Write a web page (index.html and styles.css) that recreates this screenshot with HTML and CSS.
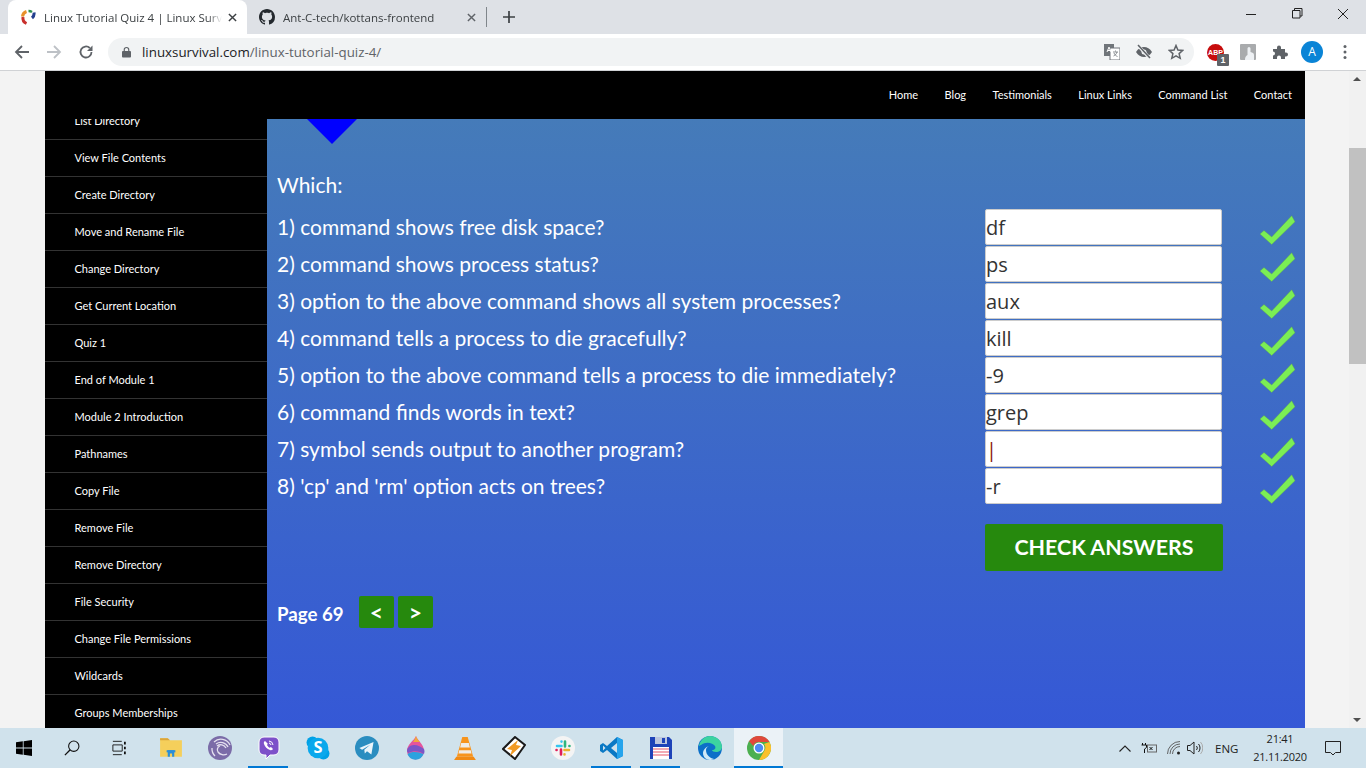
FILE: index.html
```html
<!DOCTYPE html>
<html lang="en">
<head>
  <meta charset="UTF-8">
  <title>Linux Tutorial Quiz 4 | Linux Survival</title>
  <link rel="stylesheet" href="styles.css">
</head>
<body>
  <div class="tabstrip">
    <div class="tab tab-active">
      <svg class="favicon" viewBox="0 0 16 16" fill="none" stroke-width="3">
        <path d="M2.500 7.500 A6 6 0 0 1 6.500 2.500" stroke="#e8912c"/>
        <path d="M8.500 2 A6 6 0 0 1 12 3" stroke="#2f8f4e" stroke-width="2.400"/>
        <path d="M14 3.500 A6 6 0 0 1 12 9" stroke="#24408f"/>
        <path d="M3 8 A6 6 0 0 0 6.500 14.500" stroke="#c9302c"/>
      </svg>
      <span class="tab-title">Linux Tutorial Quiz 4 | Linux Survival</span>
      <svg class="tab-close" viewBox="0 0 10 10"><path d="M1 1 9 9M9 1 1 9" stroke="#3c4043" stroke-width="1.6"/></svg>
    </div>
    <div class="tab">
      <svg class="favicon" viewBox="0 0 16 16"><path fill="#24292e" d="M8 0C3.58 0 0 3.58 0 8c0 3.54 2.29 6.53 5.47 7.59.4.07.55-.17.55-.38 0-.19-.01-.82-.01-1.49-2.01.37-2.53-.49-2.69-.94-.09-.23-.48-.94-.82-1.13-.28-.15-.68-.52-.01-.53.63-.01 1.08.58 1.23.82.72 1.21 1.87.87 2.33.66.07-.52.28-.87.51-1.07-1.78-.2-3.64-.89-3.64-3.95 0-.87.31-1.59.82-2.15-.08-.2-.36-1.02.08-2.12 0 0 .67-.21 2.2.82.64-.18 1.32-.27 2-.27.68 0 1.36.09 2 .27 1.53-1.04 2.2-.82 2.2-.82.44 1.1.16 1.92.08 2.12.51.56.82 1.27.82 2.15 0 3.07-1.87 3.75-3.65 3.95.29.25.54.73.54 1.48 0 1.07-.01 1.93-.01 2.2 0 .21.15.46.55.38A8.013 8.013 0 0016 8c0-4.42-3.58-8-8-8z"/></svg>
      <span class="tab-title">Ant-C-tech/kottans-frontend</span>
      <svg class="tab-close" viewBox="0 0 10 10"><path d="M1 1 9 9M9 1 1 9" stroke="#5f6368" stroke-width="1.6"/></svg>
    </div>
    <div class="tab-sep"></div>
    <svg class="new-tab" viewBox="0 0 12 12"><path d="M6 0V12M0 6H12" stroke="#3c4043" stroke-width="1.7"/></svg>
    <div class="win-controls">
      <svg viewBox="0 0 46 14"><path d="M18 7.500H28" stroke="#222" stroke-width="1"/></svg>
      <svg viewBox="0 0 46 14"><path d="M18.500 3.500h7.500v7.500h-7.500zM20.500 3.500v-2h7.500v7.500h-2" fill="none" stroke="#222"/></svg>
      <svg viewBox="0 0 46 14"><path d="M18 2 28 12M28 2 18 12" stroke="#222"/></svg>
    </div>
  </div>

  <div class="toolbar">
    <svg class="nav-icon" viewBox="0 0 16 16"><path d="M15 8H2M8 2 2 8l6 6" fill="none" stroke="#5f6368" stroke-width="1.8"/></svg>
    <svg class="nav-icon" viewBox="0 0 16 16"><path d="M1 8H14M8 2l6 6-6 6" fill="none" stroke="#bdc1c6" stroke-width="1.8"/></svg>
    <svg class="nav-icon" viewBox="0 0 16 16"><path d="M13.500 8A5.500 5.500 0 1 1 11.800 4" fill="none" stroke="#5f6368" stroke-width="1.8"/><path d="M14.500 1.500V7H9z" fill="#5f6368"/></svg>
    <div class="omnibox">
      <svg class="lock" viewBox="0 0 10 12"><path d="M2.500 5V3.500a2.500 2.500 0 0 1 5 0V5" fill="none" stroke="#5f6368" stroke-width="1.300"/><rect y="5" width="10" height="7" rx="1" fill="#5f6368"/></svg>
      <span class="url"><b>linuxsurvival.com</b>/linux-tutorial-quiz-4/</span>
      <svg class="omni-icon" viewBox="0 0 16 16"><rect x="0" y="0" width="10" height="12" fill="#70757a"/><rect x="6" y="4" width="10" height="12" fill="#fff" stroke="#70757a"/><path d="M9 8h5M11.500 6.500v1M13 8c-.500 2-2 3.500-3.500 4M10 9c.5 1.500 2 3 3.500 3.500" stroke="#70757a" fill="none" stroke-width=".8"/><path d="M3 8l2-5 2 5M3.800 6.500h2.400" stroke="#fff" fill="none" stroke-width="1"/></svg>
      <svg class="omni-icon" viewBox="0 0 16 16"><path d="M0 8c2-3.500 5-5 8-5s6 1.500 8 5c-2 3.500-5 5-8 5s-6-1.500-8-5z" fill="#5f6368"/><circle cx="8" cy="8" r="2.500" fill="#f1f3f4"/><path d="M2 1.500 14 14.500" stroke="#f1f3f4" stroke-width="3.200"/><path d="M2 1 14 14" stroke="#5f6368" stroke-width="1.500"/></svg>
      <svg class="omni-icon" viewBox="0 0 16 16"><path d="M8 1.500 9.900 6l4.800.4-3.600 3.200 1.100 4.700L8 11.800l-4.200 2.500 1.100-4.700L1.300 6.400 6.100 6z" fill="none" stroke="#5f6368" stroke-width="1.500"/></svg>
    </div>
    <div class="ext ext-abp"><span class="abp">ABP</span><span class="abp-count">1</span></div>
    <div class="ext">
      <svg class="ext-icon" viewBox="0 0 16 16"><rect width="16" height="16" rx="1" fill="#a9abad"/><path d="M5 16c0-3 1-4 2.500-5V4.500a1.500 1.500 0 0 1 3 0V8c2 .5 3.500 1 3.500 3v5z" fill="#eef1f4"/></svg>
    </div>
    <div class="ext">
      <svg class="ext-icon" viewBox="0 0 16 16"><path d="M1 5h4V3.500a2 2 0 0 1 4 0V5h4v3.500h1a2 2 0 0 1 0 4h-1V15H9v-1.500a2 2 0 0 0-4 0V15H1v-3.500a2 2 0 0 0 0-4z" fill="#5f6368"/></svg>
    </div>
    <div class="avatar">A</div>
    <svg class="menu-dots" viewBox="0 0 4 16"><circle cx="2" cy="2.500" r="1.500"/><circle cx="2" cy="8" r="1.500"/><circle cx="2" cy="13.500" r="1.500"/></svg>
  </div>

  <div class="viewport">
    <div class="site">
      <div class="site-header">
        <a>Home</a>
        <a>Blog</a>
        <a>Testimonials</a>
        <a>Linux Links</a>
        <a>Command List</a>
        <a>Contact</a>
      </div>
      <div class="site-body">
        <div class="sidebar">
          <ul class="lessons">
            <li>List Directory</li>
            <li>View File Contents</li>
            <li>Create Directory</li>
            <li>Move and Rename File</li>
            <li>Change Directory</li>
            <li>Get Current Location</li>
            <li>Quiz 1</li>
            <li>End of Module 1</li>
            <li>Module 2 Introduction</li>
            <li>Pathnames</li>
            <li>Copy File</li>
            <li>Remove File</li>
            <li>Remove Directory</li>
            <li>File Security</li>
            <li>Change File Permissions</li>
            <li>Wildcards</li>
            <li>Groups Memberships</li>
          </ul>
        </div>
        <div class="main">
          <div class="marker"></div>
          <p class="which">Which:</p>
          <div class="quiz" id="quiz"></div>
          <button class="check-btn">CHECK ANSWERS</button>
          <div class="pager">
            <span class="page-label">Page 69</span>
            <button class="page-btn">&lt;</button>
            <button class="page-btn">&gt;</button>
          </div>
        </div>
      </div>
    </div>
    <div class="scrollbar">
      <div class="arrow-up"></div>
      <div class="thumb"></div>
      <div class="arrow-down"></div>
    </div>
  </div>

  <div class="taskbar">
    <div class="task-start">
      <svg class="task-icon-sm" viewBox="0 0 16 16"><path fill="#000" d="M0 2.300 6.800 1.300V7.600H0zM7.600 1.200 16 0V7.600H7.600zM0 8.400H6.800V14.700L0 13.700zM7.600 8.400H16V16L7.600 14.800z"/></svg>
    </div>
    <div class="task-start">
      <svg class="task-icon-sm" viewBox="0 0 18 18"><circle cx="11" cy="7" r="5.800" fill="none" stroke="#111" stroke-width="1.200"/><path d="M7 11 1 17" stroke="#111" stroke-width="1.500"/></svg>
    </div>
    <div class="task-start">
      <svg class="task-icon-sm" viewBox="0 0 18 16"><path d="M1 .5h10M1 15.500h10M1 4.500h10.500v7H1z" fill="none" stroke="#111"/><path d="M14.500 1v3M14.500 6.500v3M14.500 12v3" stroke="#111" stroke-width="2"/></svg>
    </div>
    <div class="task-apps">
      <div class="task-app">
        <svg viewBox="0 0 22 20"><path d="M1 1h7l2 2h11v15H1z" fill="#f5cf5b"/><path d="M1 1h7l2 2H1z" fill="#dba53a"/><path d="M8 18v-6h6v6h-2v-3h-2v3z" fill="#2a8fd8"/><path d="M7 12h8v2H7z" fill="#2a8fd8"/></svg>
      </div>
      <div class="task-app">
        <svg viewBox="0 0 24 24"><circle cx="12" cy="12" r="12" fill="#7b6ca8"/><path d="M22 9A10 10 0 0 0 6 6M20 11A8 8 0 0 0 8 8M18 12A6 6 0 0 0 9 10M7 20A10 10 0 0 1 4 12" fill="none" stroke="#e4e0ef" stroke-width="1.300"/><path d="M19 18a7 7 0 0 1-9-2 4 4 0 0 1 2-6" fill="none" stroke="#e4e0ef" stroke-width="1.300"/></svg>
      </div>
      <div class="task-app task-running">
        <svg viewBox="0 0 22 24"><path d="M6 1h10a5 5 0 0 1 5 5v8a5 5 0 0 1-5 5h-4l-4 4v-4H6a5 5 0 0 1-5-5V6a5 5 0 0 1 5-5z" fill="#7d51c9" stroke="#fff" stroke-width="1"/><path d="M7 5c-1 .5-1.500 1.500-1 3 1 3 3 5 6 6 1.500.5 2.500 0 3-1l-2-2-1.500.7c-1-.5-2-1.500-2.500-2.700l.8-1.300z" fill="#fff"/><path d="M11 5a4.500 4.500 0 0 1 4 4M11 7a2.500 2.500 0 0 1 2 2" fill="none" stroke="#fff"/></svg>
      </div>
      <div class="task-app">
        <svg viewBox="0 0 22 22"><circle cx="6" cy="6" r="5.500" fill="#00a1e6"/><circle cx="16" cy="16" r="5.500" fill="#00a1e6"/><circle cx="11" cy="11" r="9.500" fill="#0aa8ec"/><text x="11" y="16" class="skype-s">S</text></svg>
      </div>
      <div class="task-app">
        <svg viewBox="0 0 22 22"><circle cx="11" cy="11" r="11" fill="#2a8dc0"/><path d="M4 11 17 5.500 15 17l-4-3-2 2-.5-3.500L14 8l-7.500 4.500z" fill="#e9f4fa"/></svg>
      </div>
      <div class="task-app">
        <svg viewBox="0 0 20 24"><path d="M10 0c1 4 8 8 8 15a8.500 8.500 0 0 1-17 0C1 8 8 5 10 0z" fill="#e6559c"/><path d="M1 15c0-3 3-6 7-6s7 2 10 4l.5 2c0 1-.2 2-.5 3-4-3-10-4-16-1-.5-1-1-1.500-1-2z" fill="#7b56c7"/><path d="M1.500 18c5-3 11-2 16 0a8.500 8.500 0 0 1-16 0z" fill="#2ca2df"/><path d="M10 0c.5 2 2 4 4 6H7c1.500-2 2.500-4 3-6z" fill="#f2a93b"/></svg>
      </div>
      <div class="task-app">
        <svg viewBox="0 0 20 22"><path d="M0 22 2 19h16l2 3z" fill="#f18a14"/><path d="M7.500 1h5l5 18h-15z" fill="#f7941d"/><path d="M6.500 6.500h7l1 4h-9zM4.700 13h10.600l.7 3H4z" fill="#f0ece6"/></svg>
      </div>
      <div class="task-app">
        <svg viewBox="0 0 24 24"><path d="M13 1 23 9l-10 14L1 13z" fill="#fff" stroke="#1a1a1a" stroke-width="2"/><path d="M16 4 5 13l5 1-2 6 11-10-5-1z" fill="#f19a24"/></svg>
      </div>
      <div class="task-app">
        <svg viewBox="0 0 24 24" fill="none" stroke-width="2.600" stroke-linecap="round"><circle cx="12" cy="12" r="12" fill="#f4f4f4"/><path d="M6 10h4.500M10.500 5.500v.1" stroke="#36c5f0"/><path d="M14 5.500v5M18.500 10h-.1" stroke="#2eb67d"/><path d="M13.500 14H18M13.500 18.500v-.1" stroke="#ecb22e"/><path d="M10 13.500v5M5.500 14h.1" stroke="#e01e5a"/></svg>
      </div>
      <div class="task-app task-running">
        <svg viewBox="0 0 24 24"><path d="M17 1 23 4v16l-6 3L7 14l-4 3-3-2v-6l3-2 4 3z" fill="#0a78c4"/><path d="M17 1 23 4v16l-6 3z" fill="#26a4ec"/><path d="M17 7v10l-6-5z" fill="#d0e2ec"/><path d="M3 9.500v5l2.500-2.500z" fill="#d0e2ec"/></svg>
      </div>
      <div class="task-app task-running">
        <svg viewBox="0 0 24 24"><path d="M1 1h19l3 3v19H1z" fill="#1e43b8"/><rect x="6" y="1" width="12" height="7" fill="#bcc6de"/><rect x="13" y="2" width="3" height="5" fill="#1e43b8"/><rect x="4" y="11" width="16" height="12" fill="#fff"/><path d="M4 13h16M4 16h16M4 19h16" stroke="#ee8e9c" stroke-width="1.500"/></svg>
      </div>
      <div class="task-app">
        <svg viewBox="0 0 24 24"><circle cx="12" cy="12" r="12" fill="#0c70c8"/><path d="M1 10C2 4 7 0 12 0c7 0 12 5 12 11 0 3-3 5-6 5-2 0-4-1-4-2 3 0 4-2 3-4-2-3-9-5-14-1-1 .5-2 1-2 1z" fill="#3cd3a0"/><path d="M8 14c0 5 4 8 8 9-1.500.7-3 1-4 1C8 24 5 21 5 17c0-3 3-6 6-7-2 1-3 2-3 4z" fill="#cfe9f7"/></svg>
      </div>
      <div class="task-app task-chrome">
        <svg viewBox="0 0 24 24"><circle cx="12" cy="12" r="12" fill="#4caf50"/><path d="M12 0a12 12 0 0 1 10.400 6H12a6 6 0 0 0-5.700 4L2.100 5.200A12 12 0 0 1 12 0z" fill="#e0483c"/><path d="M22.400 6A12 12 0 0 1 12 24l5.200-9A6 6 0 0 0 17 8z" fill="#fbc02d"/><circle cx="12" cy="12" r="5.500" fill="#fff"/><circle cx="12" cy="12" r="4.200" fill="#4c8bf5"/></svg>
      </div>
    </div>
    <div class="tray">
      <svg class="tray-chev" viewBox="0 0 12 7"><path d="M.5 6.500 6 1l5.500 5.500" fill="none" stroke="#222" stroke-width="1.100"/></svg>
      <svg class="tray-power" viewBox="0 0 17 12"><path d="M1.500 1v2M4.500 1v2M.5 3h5v2.500l-2 1.500v4" fill="none" stroke="#111"/><rect x="6.500" y="3" width="9" height="7" fill="none" stroke="#666"/><path d="M8.500 5l3 3M11.500 5l-3 3" stroke="#111"/></svg>
      <svg class="tray-wifi" viewBox="0 0 14 14"><path d="M.5 13A12.500 12.500 0 0 1 13 .5M3 13A10 10 0 0 1 13 3M5.500 13A7.500 7.500 0 0 1 13 5.500" fill="none" stroke="#555" stroke-width=".9"/><circle cx="11.500" cy="12" r="1.500" fill="#222"/></svg>
      <svg class="tray-sound" viewBox="0 0 16 14"><path d="M.5 4.500H3L7 1v12L3 9.500H.5z" fill="none" stroke="#222"/><path d="M9.500 5a3 3 0 0 1 0 4M11.500 3a6 6 0 0 1 0 8" fill="none" stroke="#222"/><path d="M13.500 1a9 9 0 0 1 0 12" fill="none" stroke="#aaa"/></svg>
      <span class="tray-lang">ENG</span>
      <div class="clock"><span>21:41</span><span>21.11.2020</span></div>
      <svg class="tray-note" viewBox="0 0 16 15"><path d="M.5.500h15v11h-5L8 14l-2.500-2.500h-5z" fill="none" stroke="#222"/></svg>
    </div>
  </div>

  <script>
    // questions and the answers already typed in
    const questions = [
      ['1) command shows free disk space?', 'df'],
      ['2) command shows process status?', 'ps'],
      ['3) option to the above command shows all system processes?', 'aux'],
      ['4) command tells a process to die gracefully?', 'kill'],
      ['5) option to the above command tells a process to die immediately?', '-9'],
      ['6) command finds words in text?', 'grep'],
      ['7) symbol sends output to another program?', '|'],
      ["8) 'cp' and 'rm' option acts on trees?", '-r']
    ];

    const quiz = document.getElementById('quiz');
    questions.forEach(q => {
      const row = document.createElement('div');
      row.className = 'quiz-row';

      const label = document.createElement('span');
      label.className = 'question';
      label.textContent = q[0];

      const input = document.createElement('input');
      input.className = q[1] === '|' ? 'answer answer-pipe' : 'answer';
      input.value = q[1];

      row.appendChild(label);
      row.appendChild(input);
      row.insertAdjacentHTML('beforeend',
        '<svg class="tick" viewBox="0 0 36 30"><path d="M0 19 4 15.500 11.700 22 31.700.7 35 6.700 11.700 29.500z"/></svg>');
      quiz.appendChild(row);
    });
  </script>
</body>
</html>
```

FILE: styles.css
```css
* {
  box-sizing: border-box;
}
html, body {
  height: 100%;
}
body {
  margin: 0;
  height: 768px;
  overflow: hidden;
  display: flex;
  flex-direction: column;
  font-family: 'Lato', sans-serif;
  background: #f3f3f3;
}

/* browser chrome */
.tabstrip {
  height: 34px;
  flex: none;
  display: flex;
  align-items: center;
  background: #dee1e6;
  padding-left: 8px;
  font-family: 'Open Sans', sans-serif;
  font-size: 11.5px;
  color: #3c4043;
}
.tab {
  width: 239px;
  height: 34px;
  display: flex;
  align-items: center;
  padding: 0 10px 0 12px;
}
.tab-active {
  background: #fff;
  border-radius: 8px 8px 0 0;
}
.favicon {
  width: 16px;
  height: 16px;
  flex: none;
  margin-right: 8px;
}
.tab-title {
  flex: 1;
  white-space: nowrap;
  overflow: hidden;
  -webkit-mask-image: linear-gradient(to right, #000 92%, transparent);
}
.tab-close {
  width: 9px;
  height: 9px;
  flex: none;
  margin-left: 6px;
}
.tab-sep {
  width: 1px;
  height: 20px;
  background: #80868b;
}
.new-tab {
  width: 12px;
  height: 12px;
  margin-left: 16px;
}
.win-controls {
  margin-left: auto;
  display: flex;
  height: 14px;
  margin-top: -6px;
}
.win-controls svg {
  width: 46px;
  height: 14px;
}

.toolbar {
  height: 37px;
  flex: none;
  display: flex;
  align-items: center;
  background: #fff;
  border-bottom: 1px solid #d0d2d5;
  padding-left: 14px;
}
.nav-icon {
  width: 16px;
  height: 16px;
  margin-right: 16px;
}
.omnibox {
  width: 1086px;
  height: 28px;
  margin-left: -2px;
  display: flex;
  align-items: center;
  background: #f1f3f4;
  border-radius: 14px;
  padding: 0 10px 0 14px;
  font-family: 'Open Sans', sans-serif;
  font-size: 13.33px;
  color: #5f6368;
}
.lock {
  width: 9px;
  height: 12px;
  margin-right: 11px;
}
.url {
  flex: 1;
}
.url b {
  font-weight: 400;
  color: #202124;
}
.omni-icon {
  width: 16px;
  height: 16px;
  margin-left: 16px;
}
.ext {
  position: relative;
  width: 16px;
  height: 16px;
  margin-left: 16px;
}
.ext-abp {
  margin-left: 13px;
  width: 18px;
}
.ext-abp + .ext {
  margin-left: 15px;
}
.ext-icon {
  display: block;
  width: 16px;
  height: 16px;
}
.abp {
  display: block;
  width: 17px;
  height: 17px;
  border-radius: 50%;
  background: #c70d0d;
  color: #fff;
  font: bold 7px/17px 'Liberation Sans', sans-serif;
  text-align: center;
}
.abp-count {
  position: absolute;
  left: 10px;
  top: 10px;
  width: 12px;
  height: 12px;
  border-radius: 1px;
  background: #5f6368;
  color: #fff;
  font: bold 9px/12px 'Liberation Sans', sans-serif;
  text-align: center;
}
.avatar {
  width: 22px;
  height: 22px;
  margin-left: 13px;
  border-radius: 50%;
  background: #0a84d6;
  color: #fff;
  font: 12px/22px 'Open Sans', sans-serif;
  text-align: center;
}
.menu-dots {
  width: 4px;
  height: 16px;
  margin-left: 20px;
  fill: #5f6368;
}

/* page */
.viewport {
  height: 657px;
  flex: none;
  display: flex;
  overflow: hidden;
}
.site {
  width: 1260px;
  margin-left: 45px;
  display: flex;
  flex-direction: column;
  color: #fff;
}
.site-header {
  height: 48px;
  flex: none;
  display: flex;
  justify-content: flex-end;
  align-items: center;
  gap: 26.4px;
  padding: 0 13px 1px 0;
  background: #000;
  font-size: 11px;
}
.site-body {
  flex: 1;
  display: flex;
  min-height: 0;
}
.sidebar {
  width: 222px;
  flex: none;
  background: #000;
  overflow: hidden;
}
.lessons {
  list-style: none;
  margin: -16px 0 0;
  padding: 0;
  font-size: 11px;
}
.lessons li {
  height: 37px;
  line-height: 36px;
  padding-left: 29.500px;
  border-bottom: 1px solid #333;
}
.main {
  flex: 1;
  padding-left: 10px;
  background: linear-gradient(#457bb9, #3558d6);
}
.marker {
  width: 0;
  height: 0;
  margin-left: 30px;
  border-left: 25px solid transparent;
  border-right: 25px solid transparent;
  border-top: 25px solid #0000ff;
}
.which {
  margin: 23px 0 7px;
  font-size: 21px;
  line-height: 35px;
}
.quiz-row {
  height: 37px;
  display: flex;
  align-items: flex-start;
}
.question {
  width: 708px;
  flex: none;
  font-size: 21px;
  line-height: 35px;
}
.answer {
  width: 237px;
  height: 36px;
  flex: none;
  padding: 0;
  border: 1px solid #ccc;
  border-radius: 2px;
  background: #fff;
  color: #333;
  font-family: 'Open Sans', sans-serif;
  font-size: 20px;
}
.answer-pipe {
  color: #8c1a0a;
}
.tick {
  width: 36px;
  height: 30px;
  flex: none;
  margin: 6px 0 0 38px;
  fill: #7bee55;
  stroke: #5fa848;
  stroke-width: .4;
}
.check-btn {
  display: block;
  width: 238px;
  height: 47px;
  margin: 19px 0 0 708px;
  padding: 0 0 2px;
  border: 0;
  border-radius: 2px;
  background: #26890d;
  color: #fff;
  font: bold 21.400px 'Lato', sans-serif;
}
.pager {
  display: flex;
  align-items: center;
  margin-top: 25px;
}
.page-label {
  width: 82px;
  padding-top: 4px;
  font-size: 18.700px;
  font-weight: bold;
}
.page-btn {
  width: 35px;
  height: 32px;
  margin-right: 4px;
  padding: 0;
  border: 0;
  border-radius: 2px;
  background: #26890d;
  color: #fff;
  font: bold 23px 'Lato', sans-serif;
}

.scrollbar {
  width: 17px;
  margin-left: 44px;
  flex: none;
  position: relative;
  background: #f1f1f1;
}
.arrow-up, .arrow-down {
  position: absolute;
  left: 4px;
  width: 0;
  height: 0;
  border-left: 4px solid transparent;
  border-right: 4px solid transparent;
}
.arrow-up {
  top: 6px;
  border-bottom: 4px solid #505050;
}
.arrow-down {
  bottom: 6px;
  border-top: 4px solid #505050;
}
.thumb {
  position: absolute;
  left: 0;
  top: 77px;
  width: 17px;
  height: 216px;
  background: #c1c1c1;
}

/* windows taskbar */
.taskbar {
  height: 40px;
  flex: none;
  display: flex;
  align-items: center;
  background: #d0e2ec;
  font-family: 'Open Sans', sans-serif;
  color: #222;
}
.task-start {
  width: 48px;
  height: 40px;
  flex: none;
  display: flex;
  align-items: center;
  justify-content: center;
}
.task-icon-sm {
  width: 16px;
  height: 16px;
}
.task-apps {
  display: flex;
  margin-left: 2px;
}
.task-app {
  width: 49px;
  height: 40px;
  display: flex;
  align-items: center;
  justify-content: center;
  border-bottom: 2px solid transparent;
  padding-top: 1px;
}
.task-app svg {
  width: 24px;
  height: 24px;
}
.task-running {
  position: relative;
}
.task-running::after {
  content: "";
  position: absolute;
  left: 4px;
  right: 5px;
  bottom: -2px;
  height: 2px;
  background: #0078d4;
}
.task-chrome {
  border-bottom-color: #0078d4;
  background: #ebf2f7;
}
.skype-s {
  fill: #fff;
  font: bold 15px 'Open Sans', sans-serif;
  text-anchor: middle;
}
.tray {
  margin-left: auto;
  display: flex;
  align-items: center;
  height: 40px;
  padding-right: 25px;
}
.tray-chev {
  width: 12px;
  height: 7px;
}
.tray-power {
  width: 17px;
  height: 12px;
  margin-left: 10px;
}
.tray-wifi {
  width: 14px;
  height: 14px;
  margin-left: 9px;
}
.tray-sound {
  width: 16px;
  height: 14px;
  margin-left: 6px;
}
.tray-lang {
  width: 25px;
  margin-left: 12px;
  font-size: 11.500px;
}
.clock {
  width: 62px;
  margin-left: 9px;
  display: flex;
  flex-direction: column;
  align-items: center;
  font-size: 11px;
  letter-spacing: -.25px;
  line-height: 18px;
}
.tray-note {
  width: 16px;
  height: 15px;
  margin-left: 14px;
}
```
